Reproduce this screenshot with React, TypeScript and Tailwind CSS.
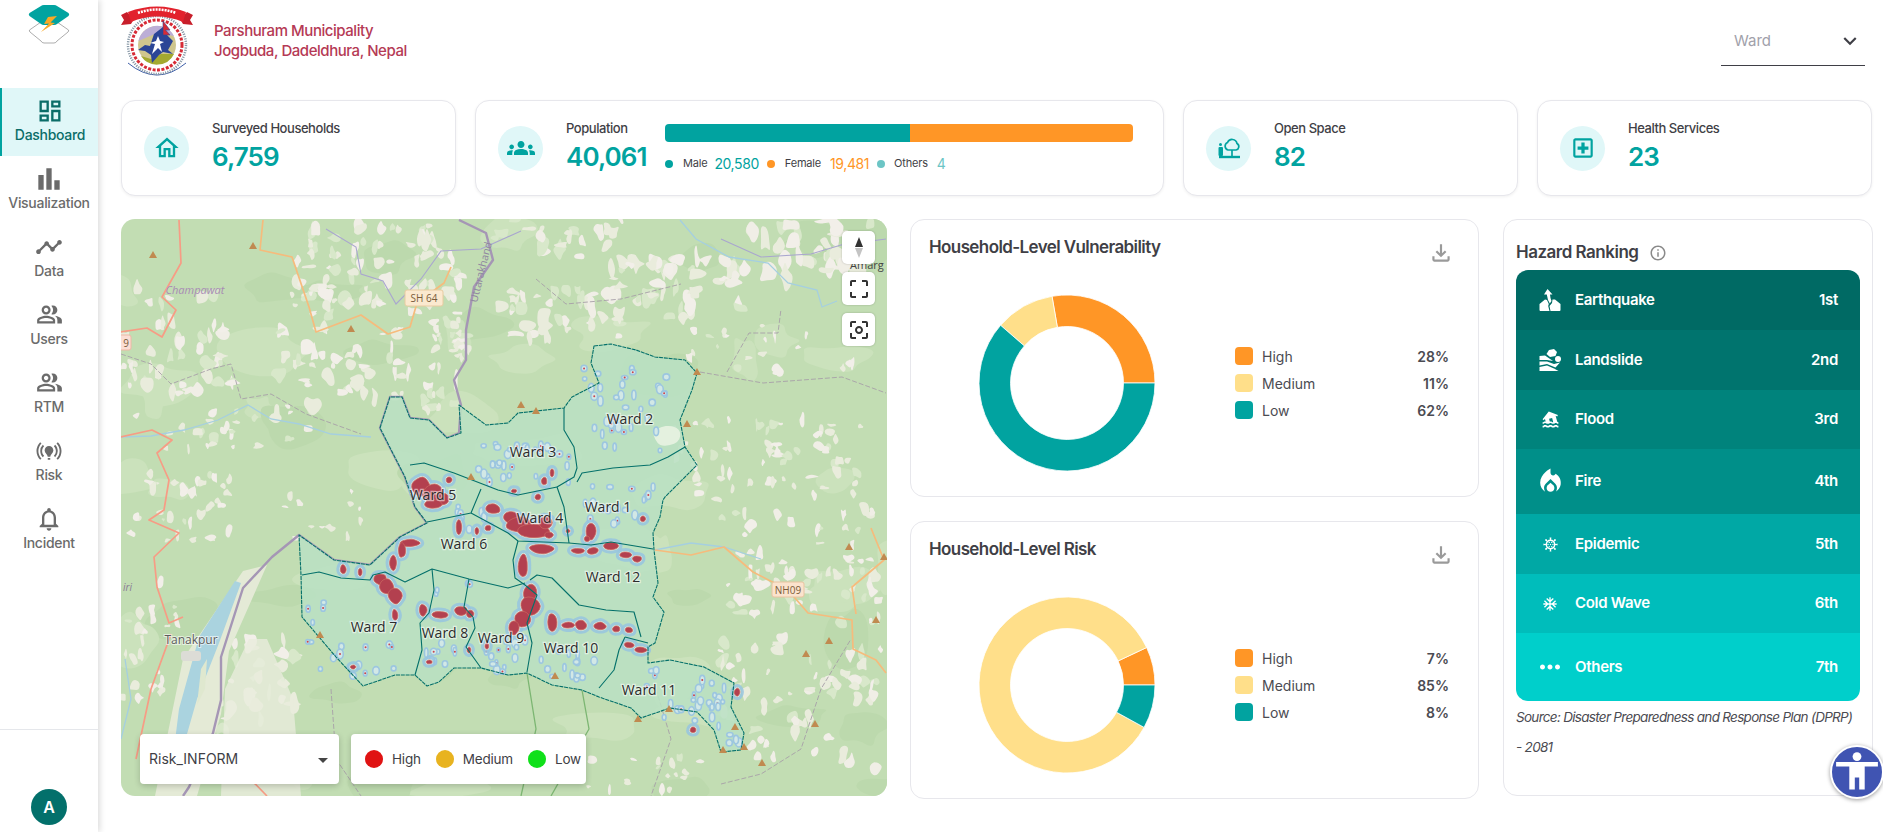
import React from 'react';
import {
  MdOutlineDashboard, MdBarChart, MdTimeline, MdOutlinePeopleAlt, MdOnlinePrediction, MdOutlineNotifications,
  MdOutlineHome, MdGroups, MdOutlineLocalHospital, MdInfoOutline, MdOutlineFileDownload, MdExpandMore,
  MdFlood, MdLocalFireDepartment, MdOutlineCoronavirus, MdAcUnit, MdMoreHoriz, MdArrowDropDown,
  MdCropFree, MdCenterFocusWeak,
} from 'react-icons/md';

// small seeded random so the map looks the same on every load
const makeRandom = (seed: number) => () => {
  seed = (seed * 16807) % 2147483647;
  return (seed - 1) / 2147483646;
};

const blobPath = (cx: number, cy: number, rx: number, ry: number, rnd: () => number, jitter = 0.3, n = 9) => {
  const pts = Array.from({ length: n }, (_, i) => {
    const a = (i / n) * Math.PI * 2;
    const k = 1 - jitter + rnd() * jitter * 2;
    return [cx + Math.cos(a) * rx * k, cy + Math.sin(a) * ry * k];
  });
  let d = '';
  pts.forEach((p, i) => {
    const q = pts[(i + 1) % n];
    const mx = ((p[0] + q[0]) / 2).toFixed(1);
    const my = ((p[1] + q[1]) / 2).toFixed(1);
    d += i === 0 ? `M${mx} ${my}` : ` Q${p[0].toFixed(1)} ${p[1].toFixed(1)} ${mx} ${my}`;
  });
  const f = pts[0];
  const s = pts[1];
  return `${d} Q${f[0].toFixed(1)} ${f[1].toFixed(1)} ${((f[0] + s[0]) / 2).toFixed(1)} ${((f[1] + s[1]) / 2).toFixed(1)}Z`;
};

// cx, cy, spread x, spread y, count, patch size
const patchClusters = [
  [240, 50, 70, 45, 70, 5], [320, 50, 25, 30, 18, 6], [60, 120, 60, 55, 46, 5], [250, 150, 95, 45, 70, 5],
  [100, 210, 90, 25, 26, 4], [440, 95, 60, 25, 36, 6], [560, 70, 70, 30, 50, 6], [690, 30, 60, 28, 36, 7],
  [650, 130, 90, 25, 22, 4], [640, 240, 100, 40, 60, 4], [680, 330, 80, 40, 40, 4], [680, 450, 80, 100, 90, 5],
  [60, 290, 50, 35, 34, 4], [130, 490, 45, 70, 44, 6], [30, 420, 30, 60, 24, 4], [520, 555, 60, 18, 16, 4],
  [440, 20, 70, 20, 20, 6], [330, 120, 20, 30, 16, 4], [200, 300, 40, 30, 12, 3],
];
const softPatches = (() => {
  const rnd = makeRandom(77);
  return Array.from({ length: 60 }, () => ({
    d: blobPath(rnd() * 766, rnd() * 577, 12 + rnd() * 30, 8 + rnd() * 20, rnd, 0.4, 11),
    c: rnd() > 0.4 ? '#cbe2bc' : '#bcd9ad',
  }));
})();
const terrainPatches = (() => {
  const rnd = makeRandom(4711);
  const colours = ['#f0eee6', '#e9ecdc', '#d8e8ca', '#e9ecdc', '#f2efe9'];
  return patchClusters.flatMap(([cx, cy, sx, sy, count, size]) =>
    Array.from({ length: count }, () => {
      const x = cx + (rnd() * 2 - 1) * sx;
      const y = cy + (rnd() * 2 - 1) * sy;
      const c = colours[Math.floor(rnd() * colours.length)];
      return { d: blobPath(x, y, size * (0.4 + rnd()), size * (0.4 + rnd() * 1.3), rnd, 0.6, 8), c };
    }),
  );
})();

const toLine = (pts: number[][]) => pts.map(p => p.join(',')).join(' ');

const outline = [
  [473, 127], [490, 125], [515, 131], [534, 138], [564, 141], [576, 154], [571, 171], [559, 201], [564, 228], [576, 246],
  [544, 278], [542, 281], [539, 298], [532, 314], [533, 331], [537, 364], [532, 378], [543, 393], [534, 424], [527, 428],
  [527, 444], [549, 441], [583, 448], [613, 464], [610, 488], [623, 514], [620, 531], [600, 533], [593, 511], [576, 493],
  [549, 489], [520, 499], [510, 489], [478, 478], [461, 471], [431, 466], [406, 454], [387, 456], [360, 449], [333, 449],
  [318, 463], [306, 467], [294, 456], [274, 456], [242, 467], [215, 438], [181, 398], [180, 356], [178, 316], [213, 341],
  [249, 346], [279, 318], [306, 304], [294, 288], [284, 258], [259, 209], [269, 178], [281, 178], [289, 199], [308, 201],
  [326, 219], [340, 214], [338, 186], [365, 206], [387, 204], [397, 194], [443, 189], [451, 178], [478, 164], [470, 144],
];

const wardLines = [
  [[443, 189], [443, 211], [453, 228], [456, 249], [453, 258], [436, 268]],
  [[456, 263], [461, 254], [492, 249], [529, 246], [547, 238], [564, 228]],
  [[289, 246], [303, 244], [333, 254], [377, 271], [397, 276], [436, 268]],
  [[436, 268], [443, 288], [448, 324]],
  [[360, 270], [350, 294], [306, 303]],
  [[350, 294], [387, 314], [397, 322], [448, 324], [470, 326], [490, 323], [532, 330]],
  [[397, 322], [392, 341], [394, 359], [404, 366]],
  [[181, 356], [198, 353], [220, 359], [249, 361], [252, 356], [264, 353], [284, 363], [311, 350], [348, 360], [387, 369], [404, 364]],
  [[311, 350], [313, 371], [308, 394], [299, 404], [301, 431], [294, 456]],
  [[348, 360], [343, 388], [352, 398], [354, 409], [345, 428], [360, 449]],
  [[404, 366], [416, 376], [406, 404], [411, 424], [406, 453]],
  [[409, 361], [416, 356], [431, 359], [458, 386], [485, 391], [513, 393], [520, 418]],
  [[504, 418], [527, 424]],
  [[504, 418], [498, 431], [493, 451], [478, 469]],
];

// red hot spots: cx, cy, rx, ry
const hotSpots = [
  [300, 268, 11, 10], [312, 274, 11, 10], [320, 280, 9, 7], [312, 285, 9, 5], [372, 290, 8, 5], [390, 298, 9, 6], [398, 306, 13, 8],
  [412, 312, 18, 7], [424, 304, 7, 7], [428, 316, 5, 3], [470, 312, 5, 9], [466, 320, 3, 3], [421, 330, 13, 5], [457, 332, 7, 2.5],
  [472, 332, 6, 3.5], [490, 327, 8, 4], [505, 336, 6, 3], [516, 340, 5, 3], [289, 324, 10, 4], [281, 331, 4, 8], [272, 344, 4, 8],
  [338, 308, 3, 8], [402, 347, 5, 12], [259, 360, 7, 6], [266, 368, 8, 8], [274, 377, 7, 8], [274, 396, 3, 6], [302, 391, 4, 6],
  [319, 396, 9, 3.5], [340, 392, 7, 5], [349, 395, 4, 4], [409, 374, 7, 9], [409, 387, 10, 9], [402, 400, 8, 9], [393, 409, 5, 7],
  [431, 403, 5, 9], [447, 406, 7, 3], [460, 406, 6, 5], [479, 407, 6, 4], [495, 410, 4, 3], [508, 411, 4, 3], [508, 426, 5, 3],
  [520, 431, 6, 3], [616, 473, 3, 4], [572, 511, 3, 3], [222, 350, 3, 5], [239, 353, 2, 4], [447, 312, 2, 2], [367, 309, 3, 3],
  [522, 300, 3, 3], [393, 272, 3, 2], [423, 262, 3, 4], [417, 278, 3, 3], [431, 254, 2, 4], [328, 261, 3, 3], [356, 312, 2, 4],
  [232, 448, 3, 2], [348, 431, 2, 3], [308, 443, 3, 2], [366, 427, 2, 3],
];

// small pale-blue rings with a pale centre
const rings = (() => {
  const rnd = makeRandom(99);
  const zones = [
    [505, 180, 42, 32, 28], [500, 225, 40, 18, 8], [405, 245, 48, 22, 30], [495, 285, 38, 20, 18], [350, 300, 14, 18, 8],
    [245, 440, 50, 18, 12], [195, 395, 16, 30, 6], [320, 435, 20, 12, 10], [385, 435, 20, 18, 14], [450, 445, 30, 14, 14],
    [590, 480, 22, 20, 18], [570, 495, 30, 16, 8], [608, 522, 10, 8, 4], [345, 370, 30, 6, 4], [530, 460, 6, 12, 4],
  ];
  return zones.flatMap(([cx, cy, sx, sy, count]) =>
    Array.from({ length: count }, () => ({
      x: cx + (rnd() * 2 - 1) * sx,
      y: cy + (rnd() * 2 - 1) * sy,
      rx: 1.6 + rnd() * 1.8,
      ry: 2 + rnd() * 3,
      dot: rnd() > 0.72,
    })),
  );
})();

const peaks = [
  [132, 27], [32, 36], [230, 110], [400, 186], [415, 192], [576, 153], [566, 205], [350, 258], [728, 328], [763, 338], [755, 401],
  [708, 422], [685, 435], [694, 505], [641, 544], [434, 457], [548, 490], [517, 500], [602, 531], [623, 528], [614, 508], [199, 416],
];

const wardLabels: [string, number, number][] = [
  ['Ward 2', 509, 200], ['Ward 3', 412, 233], ['Ward 5', 312, 276], ['Ward 1', 487, 288], ['Ward 4', 419, 299], ['Ward 6', 343, 325],
  ['Ward 12', 492, 358], ['Ward 7', 253, 408], ['Ward 8', 324, 414], ['Ward 9', 380, 419], ['Ward 10', 450, 429], ['Ward 11', 528, 471],
];

const MapDrawing = () => {
  const hotRnd = makeRandom(321);
  const hotPaths = hotSpots.map(([x, y, rx, ry]) => blobPath(x, y, rx, ry, hotRnd, 0.14));
  return (
    <svg viewBox="0 0 766 577" className="block h-full w-full">
      <rect width="766" height="577" fill="#c2ddb3" />
      {softPatches.map((p, i) => <path key={i} d={p.d} fill={p.c} />)}
      {terrainPatches.map((p, i) => <path key={i} d={p.d} fill={p.c} />)}
      <path d="M104 470 L128 420 L146 420 L172 480 L180 577 L100 577Z" fill="#e8ecdc" fillOpacity="0.8" />
      <path d="M122 352 L146 346 L108 432 L100 495 L76 577 L34 577 L62 440Z" fill="#e4ead6" />
      <path d="M120 364 L114 362 L78 418 L58 490 L52 538 L60 536 L76 480 L98 424Z" fill="#aad3df" />
      <path d="M80 450 L86 440 L84 470 L76 486Z" fill="#dfe8cf" />
      <rect x="60" y="432" width="20" height="10" rx="3" fill="#dcdcd6" />

      {/* rivers */}
      <g fill="none" stroke="#a5cfe0" strokeWidth="1.3">
        <polyline points="559,1 575,20 608,38 647,44 667,64 696,71 701,88 716,82" />
        <polyline points="0,218 30,217 63,211 97,201 127,186 150,200 178,205 210,215 250,218" />
        <polyline points="534,331 570,324 603,328 640,340" />
        <polyline points="0,520 10,480 4,440" />
      </g>
      <g fill="none" stroke="#a9a6cf" strokeWidth="1.1">
        <polyline points="205,10 235,28 240,55 262,62 275,85 300,60 320,32 360,30 400,12" />
        <polyline points="600,20 640,38 690,35 720,26 765,20" />
      </g>

      {/* dashed admin lines */}
      <g fill="none" stroke="#a79fa8" strokeWidth="0.9" strokeDasharray="5 2">
        <polyline points="579,153 642,164 721,158 765,174" />
        <polyline points="606,153 628,114 657,114 660,90" />
        <polyline points="0,135 30,145 50,165 90,150 110,145 120,180 150,175 185,195 240,215" />
        <polyline points="415,60 445,85 500,80 560,65" />
        <polyline points="535,470 550,520 530,577" />
        <polyline points="600,565 640,555 680,530 700,470 730,420" />
        <polyline points="210,470 215,540 240,577" />
      </g>

      {/* park boundary */}
      <g fill="none" stroke="#7cb672" strokeWidth="1.3">
        <polyline points="406,454 415,510 400,577" />
        <polyline points="461,471 468,510 430,577" />
      </g>

      {/* roads */}
      <g fill="none" stroke="#f6bb7c" strokeWidth="1.7" strokeLinejoin="round">
        <polyline points="142,1 139,31 171,38 188,88 195,113 240,96 267,115 289,108 296,84 323,64 330,48" />
        <polyline points="534,331 570,336 603,328 632,353 667,371 687,394 731,401 732,430 755,441 765,454" />
        <polyline points="750,309 763,341 731,368 735,395" />
      </g>
      <g fill="none" stroke="#f79c85" strokeWidth="1.7" strokeLinejoin="round">
        <polyline points="58,1 60,44 41,78 55,91 41,118 26,109 -1,113" />
        <polyline points="-1,218 31,211 51,221 36,234 48,261 43,291 28,301 58,314 33,338 36,368 48,404 62,398" />
        <polyline points="50,415 30,470 15,540" />
        <polyline points="110,540 146,577" />
      </g>

      {/* state border */}
      <g fill="none" stroke="#a596b5" strokeWidth="2.4" strokeLinejoin="round">
        <polyline points="338,1 365,14 372,41 353,68 345,111 345,141 333,161 340,186 338,214 326,219 308,201 289,199 281,178 269,178 259,209 284,258 294,288 306,304 279,318 249,346 213,341 178,316 151,338 122,369 100,438 100,481 92,514 68,568 62,577" />
      </g>

      {/* municipality */}
      <polygon points={toLine(outline)} fill="#b9e0c3" fillOpacity="0.88" />
      <path d={blobPath(547, 217, 15, 11, makeRandom(8), 0.15)} fill="#e4f1df" />
      {rings.map((r, i) => (
        <g key={i}>
          <ellipse cx={r.x} cy={r.y} rx={r.rx} ry={r.ry} fill="#d2e8e6" stroke="#9cc6e0" strokeWidth="1.6" />
          {r.dot && <circle cx={r.x} cy={r.y} r="1" fill="#c9444f" />}
        </g>
      ))}
      {hotPaths.map((d, i) => <path key={i} d={d} fill="#a9d3e2" stroke="#97c4df" strokeOpacity="0.85" strokeWidth="8" strokeLinejoin="round" />)}
      {hotPaths.map((d, i) => <path key={i} d={d} fill="#dfe9dc" stroke="#dfe9dc" strokeWidth="2" />)}
      {hotPaths.map((d, i) => <path key={i} d={d} fill="#b3404f" stroke="#c8655f" strokeWidth="0.8" />)}

      <g fill="none" stroke="#04706a" strokeWidth="1.1" strokeLinejoin="round">
        <polygon points={toLine(outline)} strokeDasharray="4 0.8" />
        {wardLines.map((l, i) => <polyline key={i} points={toLine(l)} />)}
      </g>

      {peaks.map(([x, y], i) => <polygon key={i} points={`${x},${y - 4} ${x + 4},${y + 3} ${x - 4},${y + 3}`} fill="#c08a50" />)}

      {/* labels */}
      <g className="font-['Open_Sans',sans-serif]">
        {wardLabels.map(([t, x, y]) => (
          <text key={t} x={x} y={y + 5} textAnchor="middle" fontSize="14" fill="#2b2b2b" stroke="#ffffff" strokeOpacity="0.55" strokeWidth="2.5" paintOrder="stroke">{t}</text>
        ))}
        <text x="74" y="75" textAnchor="middle" fontSize="11" fontStyle="italic" fill="#a88bb5">Champawat</text>
        <text x="0" y="0" transform="translate(356 84) rotate(-76)" fontSize="10.5" fill="#8f86a0">Uttarakhand</text>
        <text x="70" y="425" textAnchor="middle" fontSize="12" fill="#5c5c5c" stroke="#ffffff" strokeOpacity="0.6" strokeWidth="2" paintOrder="stroke">Tanakpur</text>
        <text x="729" y="50" fontSize="11" fill="#444444">Amarg</text>
        <rect x="284" y="71" width="38" height="16" rx="2" fill="#fbe9cf" stroke="#e8cba0" />
        <text x="303" y="83" textAnchor="middle" fontSize="10" fill="#7a5c3a">SH 64</text>
        <rect x="651" y="363" width="32" height="15" rx="2" fill="#fbe3cd" stroke="#e8c3a0" />
        <text x="667" y="374.5" textAnchor="middle" fontSize="10" fill="#7a5c3a">NH09</text>
        <rect x="-4" y="116" width="14" height="15" rx="2" fill="#fbded4" stroke="#eeb7a5" />
        <text x="5" y="127.5" textAnchor="middle" fontSize="10" fill="#7a5c3a">9</text>
        <text x="2" y="372" fontSize="10" fontStyle="italic" fill="#8a7a95">iri</text>
      </g>
    </svg>
  );
};

const AppLogo = () => (
  <svg viewBox="0 0 42 40" className="h-[40px] w-[42px]">
    <path d="M1.5 25 Q1 26 2 27 L13 36 Q14 38 16 38 H26 Q28 38 29 36 L40 27 Q41 26 40.5 25 L29 17 H13Z" fill="#ffffff" stroke="#8a8a8a" strokeWidth="0.7" />
    <path d="M1.5 8 Q0 9.5 1.5 11 L13 19 Q14 20 16 20 H26 Q28 20 29 19 L40.5 11 Q42 9.5 40.5 8 L29 1 Q28 0 26 0 H16 Q14 0 13 1Z" fill="#01a3a0" />
    <path d="M29 11 L20 12 L16 19 L21 18.5 L13 27 L27 18 L22.5 17.5Z" fill="#f9a926" />
  </svg>
);

// simplified municipality seal
const Emblem = () => (
  <svg viewBox="0 0 72 72" className="h-[72px] w-[72px] shrink-0">
    <path d="M7 58 Q36 82 65 58" fill="none" stroke="#3f5fa8" strokeWidth="1" />
    <circle cx="36" cy="40" r="29" fill="none" stroke="#8a9aa8" strokeWidth="2.5" strokeDasharray="1.2 1.2" />
    <circle cx="36" cy="40" r="25" fill="none" stroke="#d62b36" strokeWidth="3" strokeDasharray="3 1.5" />
    <circle cx="36" cy="40" r="21" fill="#ffffff" />
    <circle cx="36" cy="40" r="19" fill="#cfc68e" />
    <path d="M17.5 36 A19 19 0 0 1 53 31 L36 28Z" fill="#bcaed6" />
    <path d="M20 51 A19 19 0 0 0 53 49 L40 49 L30 54Z" fill="#a3a930" />
    <path d="M17 45 L24 40 L29 41 L33 29 L42 22 L46 30 L52 36 L47 45 L52 49 L42 47 L38 50 L31 58 L30 50 L24 46Z" fill="#2b4596" />
    <path d="M37 31 L39 36 L43 37 L39 39 L41 47 L37 43 L31 49 L34 39 L29 38 L35 36Z" fill="#ffffff" />
    <path d="M42 16 L42 30 L49 30 L44.5 25 L49 25Z" fill="#d62b36" stroke="#2b4596" strokeWidth="0.6" />
    <path d="M6 7 L0 10 L3 15 L0 20 L10 19 L13 14Z" fill="#c81e2a" />
    <path d="M66 7 L72 10 L69 15 L72 20 L62 19 L59 14Z" fill="#c81e2a" />
    <path d="M7 7 Q36 -4 65 7 L62 17 Q36 6 10 17Z" fill="#e2222d" />
    <path d="M17 8 Q36 1 55 8" fill="none" stroke="#ffffff" strokeWidth="2.6" strokeDasharray="2 1" />
  </svg>
);

const EarthquakeIcon = () => (
  <svg viewBox="0 0 22 22" className="h-[22px] w-[22px]" fill="#ffffff">
    <path d="M8.5 0 L13.5 5.5 L11 5.5 L11.5 9 L12.5 12 L10.8 14.5 L9 11 L7.8 5.5 L5 5.5Z" />
    <path d="M0.5 15 L6 10.5 L8 11 L9.8 15 L9.2 17 L10.5 22 H1.5 Q0.5 22 0.5 21Z" />
    <path d="M13.5 10.5 L16 10.5 L21.5 15 V21 Q21.5 22 20.5 22 H11.5 L10.5 17 L13 14Z" />
  </svg>
);

const LandslideIcon = () => (
  <svg viewBox="0 0 22 22" className="h-[22px] w-[22px]" fill="#ffffff">
    <path d="M7.5 5 L10 1 L15 0 L18 3 L16.5 7 L11 8Z" />
    <circle cx="19" cy="10" r="3" />
    <path d="M0.5 7 L6 6.5 L14 12 L8 11 L0.5 11Z" />
    <path d="M0.5 12.5 L8 12.5 L15 15 L21 13.5 L16.5 18.5 L8 15 L0.5 16.5Z" />
    <path d="M0.5 18 L8 16.5 L15 19.5 L19.5 22 H0.5Z" />
  </svg>
);

const navItems = [
  { label: 'Dashboard', icon: MdOutlineDashboard, size: 28, active: true },
  { label: 'Visualization', icon: MdBarChart, size: 32 },
  { label: 'Data', icon: MdTimeline, size: 28 },
  { label: 'Users', icon: MdOutlinePeopleAlt, size: 27 },
  { label: 'RTM', icon: MdOutlinePeopleAlt, size: 27 },
  { label: 'Risk', icon: MdOnlinePrediction, size: 30 },
  { label: 'Incident', icon: MdOutlineNotifications, size: 28 },
];

const Sidebar = () => (
  <aside className="z-10 flex h-full w-[98px] shrink-0 flex-col bg-white shadow-[2px_0_6px_rgba(0,0,0,0.14)]">
    <div className="flex h-[88px] justify-center pt-[5px]"><AppLogo /></div>
    <nav className="flex-1">
      {navItems.map(item => (
        <div
          key={item.label}
          className={item.active
            ? 'flex h-[68px] flex-col items-center justify-center border-l-2 border-[#01a3a0] bg-[#e0f7f8] pb-[3px] text-[#0a6d68]'
            : 'flex h-[68px] flex-col items-center justify-center pb-[3px] text-[#6b6b6b]'}
        >
          <span className="flex h-[26px] items-center justify-center"><item.icon size={item.size} className="shrink-0" /></span>
          <span className="mt-[2px] text-[14px] leading-[18px] font-medium tracking-[-0.3px]">{item.label}</span>
        </div>
      ))}
    </nav>
    <div className="flex h-[103px] items-end justify-center border-t border-[#e5e7eb] pb-[7px]">
      <div className="flex h-[36px] w-[36px] items-center justify-center rounded-full bg-[#03706b] text-[16px] font-semibold text-white">A</div>
    </div>
  </aside>
);

const IconCircle = ({ children }: { children: React.ReactNode }) => (
  <div className="flex h-[45px] w-[45px] shrink-0 items-center justify-center rounded-full bg-[#e0f7f8] text-[#01a3a0]">{children}</div>
);

const cardClass = 'flex h-[96px] items-center rounded-[14px] border border-[#e7e7ec] bg-white pl-[22px] shadow-[0_1px_3px_rgba(0,0,0,0.06)]';

const StatCard = ({ icon, label, value }: { icon: React.ReactNode; label: string; value: string }) => (
  <div className={`${cardClass} w-[335px] shrink-0`}>
    <IconCircle>{icon}</IconCircle>
    <div className="ml-[23px] -translate-y-[2px]">
      <p className="text-[13px] leading-[18px] font-medium tracking-[-0.45px] text-[#3f3f46]">{label}</p>
      <p className="mt-[4px] text-[26px] leading-[32px] font-semibold tracking-[-0.9px] text-[#01a3a0]">{value}</p>
    </div>
  </div>
);

const OpenSpaceIcon = () => (
  <svg viewBox="0 0 24 24" className="h-[24px] w-[24px]" fill="none" stroke="#01a3a0" strokeWidth="1.7">
    <path d="M11 14 H19 A3.5 3.5 0 0 0 20 7.5 A5 5 0 0 0 10.5 6.5 A4 4 0 0 0 11 14Z" />
    <path d="M15 14 V20" />
    <path d="M2 21 H23" strokeWidth="2.4" />
    <circle cx="3.5" cy="8.5" r="1.5" fill="#01a3a0" stroke="none" />
    <rect x="1.5" y="11" width="4.5" height="9" rx="1" fill="#01a3a0" stroke="none" />
  </svg>
);

const PopulationCard = () => (
  <div className={`${cardClass} w-[689px] shrink-0`}>
    <IconCircle><MdGroups size={28} /></IconCircle>
    <div className="ml-[23px] w-[99px] shrink-0 -translate-y-[2px]">
      <p className="text-[13px] leading-[18px] font-medium tracking-[-0.45px] text-[#3f3f46]">Population</p>
      <p className="mt-[4px] text-[26px] leading-[32px] font-semibold tracking-[-0.9px] text-[#01a3a0]">40,061</p>
    </div>
    <div className="w-[468px]">
      <div className="flex h-[18px] overflow-hidden rounded-[4px]">
        <div className="w-[245px] bg-[#01a3a0]" />
        <div className="flex-1 bg-[#ff9626]" />
      </div>
      <div className="mt-[13px] flex h-[18px] items-center text-[11px] tracking-[-0.2px] text-[#3f3f46]">
        <span className="h-[8px] w-[8px] rounded-full bg-[#01a3a0]" />
        <span className="ml-[10px]">Male</span>
        <span className="ml-[7px] text-[14px] tracking-[-0.4px] text-[#01a3a0]">20,580</span>
        <span className="ml-[8px] h-[8px] w-[8px] rounded-full bg-[#ff9626]" />
        <span className="ml-[10px]">Female</span>
        <span className="ml-[9px] text-[14px] tracking-[-0.4px] text-[#ff9626]">19,481</span>
        <span className="ml-[8px] h-[8px] w-[8px] rounded-full bg-[#6cc5c5]" />
        <span className="ml-[9px]">Others</span>
        <span className="ml-[9px] text-[14px] text-[#6cc5c5]">4</span>
      </div>
    </div>
  </div>
);

const polar = (cx: number, cy: number, r: number, deg: number) => {
  const a = (deg * Math.PI) / 180;
  return [cx + r * Math.cos(a), cy - r * Math.sin(a)];
};

// slices go counter-clockwise from 3 o'clock
const Donut = ({ slices }: { slices: { value: number; colour: string }[] }) => {
  const total = slices.reduce((s, x) => s + x.value, 0);
  let start = 0;
  return (
    <svg viewBox="0 0 180 180" className="h-[180px] w-[180px] shrink-0">
      {slices.map((s, i) => {
        const end = start + (s.value / total) * 360;
        const [x1, y1] = polar(90, 90, 88, start);
        const [x2, y2] = polar(90, 90, 88, end);
        const [x3, y3] = polar(90, 90, 56.5, end);
        const [x4, y4] = polar(90, 90, 56.5, start);
        const large = end - start > 180 ? 1 : 0;
        const d = `M${x1} ${y1} A88 88 0 ${large} 0 ${x2} ${y2} L${x3} ${y3} A56.5 56.5 0 ${large} 1 ${x4} ${y4}Z`;
        start = end;
        return <path key={i} d={d} fill={s.colour} stroke="#ffffff" strokeWidth="0.8" />;
      })}
    </svg>
  );
};

const levelColours = { High: '#ff9626', Medium: '#ffdf8a', Low: '#01a3a0' };

const ChartCard = ({ title, high, medium, low }: { title: string; high: number; medium: number; low: number }) => {
  const rows: [keyof typeof levelColours, number][] = [['High', high], ['Medium', medium], ['Low', low]];
  return (
    <div className="relative h-[278px] rounded-[14px] border border-[#e7e7ec] bg-white">
      <h3 className="absolute top-[15px] left-[18px] text-[17px] leading-[24px] font-semibold tracking-[-0.6px] text-[#3f3f46]">{title}</h3>
      <MdOutlineFileDownload size={26} className="absolute top-[20px] right-[24px] text-[#9a9a9a]" />
      <div className="flex h-full items-center pt-[50px] pl-[66px]">
        <Donut slices={rows.map(([k, v]) => ({ value: v, colour: levelColours[k] }))} />
        <div className="ml-[78px] flex w-[214px] flex-col gap-[9px]">
          {rows.map(([k, v]) => (
            <div key={k} className="flex h-[18px] items-center text-[14px] text-[#4b4b52]">
              <span className="mr-[9px] h-[18px] w-[18px] rounded-[4px]" style={{ backgroundColor: levelColours[k] }} />
              <span>{k}</span>
              <span className="ml-auto font-semibold">{v}%</span>
            </div>
          ))}
        </div>
      </div>
    </div>
  );
};

const hazards = [
  { name: 'Earthquake', rank: '1st', bg: 'bg-[#006a64]', h: 'h-[60px]', icon: <EarthquakeIcon /> },
  { name: 'Landslide', rank: '2nd', bg: 'bg-[#00746e]', h: 'h-[60px]', icon: <LandslideIcon /> },
  { name: 'Flood', rank: '3rd', bg: 'bg-[#00837c]', h: 'h-[59px]', icon: <MdFlood size={19} /> },
  { name: 'Fire', rank: '4th', bg: 'bg-[#008f89]', h: 'h-[65px]', icon: <MdLocalFireDepartment size={31} className="shrink-0" /> },
  { name: 'Epidemic', rank: '5th', bg: 'bg-[#00a8a5]', h: 'h-[60px]', icon: <MdOutlineCoronavirus size={17} /> },
  { name: 'Cold Wave', rank: '6th', bg: 'bg-[#00bdbb]', h: 'h-[59px]', icon: <MdAcUnit size={16} /> },
  { name: 'Others', rank: '7th', bg: 'bg-[#00cfcb]', h: 'h-[68px]', icon: <MdMoreHoriz size={30} className="shrink-0" /> },
];

const HazardCard = () => (
  <div className="ml-px h-[577px] w-[370px] shrink-0 rounded-[14px] border border-[#e7e7ec] bg-white px-[12px]">
    <div className="flex h-[50px] items-center pt-[15px]">
      <h3 className="text-[17px] font-semibold tracking-[-0.5px] text-[#3f3f46]">Hazard Ranking</h3>
      <MdInfoOutline size={18} className="ml-[11px] text-[#8a8a8a]" />
    </div>
    <div className="overflow-hidden rounded-[12px]">
      {hazards.map(h => (
        <div key={h.name} className={`flex items-center text-[15px] font-semibold tracking-[-0.3px] text-white ${h.bg} ${h.h}`}>
          <span className="ml-[23px] flex w-[22px] justify-center">{h.icon}</span>
          <span className="ml-[14px]">{h.name}</span>
          <span className="mr-[22px] ml-auto">{h.rank}</span>
        </div>
      ))}
    </div>
    <p className="mt-[1px] text-[13.5px] leading-[30px] tracking-[-0.7px] whitespace-nowrap text-[#4b4b52] italic">
      Source: Disaster Preparedness and Response Plan (DPRP)
      <br />
      - 2081
    </p>
  </div>
);

const MapCard = () => (
  <div className="relative h-[577px] w-[766px] shrink-0 overflow-hidden rounded-[14px]">
    <MapDrawing />
    <div className="absolute top-[12px] right-[12px] flex flex-col gap-[8px]">
      <div className="flex h-[33px] w-[33px] flex-col items-center justify-center gap-[1px] rounded-[5px] bg-white shadow-[0_0_2px_rgba(0,0,0,0.25)]">
        <span className="h-0 w-0 border-x-[4px] border-b-[10px] border-x-transparent border-b-[#333333]" />
        <span className="h-0 w-0 border-x-[4px] border-t-[10px] border-x-transparent border-t-[#c4c4c4]" />
      </div>
      <div className="flex h-[33px] w-[33px] items-center justify-center rounded-[5px] bg-white text-[#333333] shadow-[0_0_2px_rgba(0,0,0,0.25)]"><MdCropFree size={24} /></div>
      <div className="flex h-[33px] w-[33px] items-center justify-center rounded-[5px] bg-white text-[#333333] shadow-[0_0_2px_rgba(0,0,0,0.25)]"><MdCenterFocusWeak size={24} /></div>
    </div>
    <div className="absolute bottom-[12px] left-[19px] flex gap-[12px]">
      <div className="flex h-[50px] w-[199px] items-start justify-between rounded-[4px] bg-white pt-[14px] pr-[4px] pl-[9px] shadow-[0_2px_6px_rgba(0,0,0,0.2)]">
        <span className="text-[14px] text-[#3f3f46]">Risk_INFORM</span>
        <MdArrowDropDown size={24} className="text-[#444444]" />
      </div>
      <div className="flex h-[50px] w-[235px] items-center gap-[9px] rounded-[4px] bg-white pl-[14px] text-[13.5px] tracking-[-0.2px] text-[#3f3f46] shadow-[0_2px_6px_rgba(0,0,0,0.2)]">
        <span className="h-[18px] w-[18px] rounded-full bg-[#e01313]" />
        <span className="mr-[6px]">High</span>
        <span className="h-[18px] w-[18px] rounded-full bg-[#e8b320]" />
        <span className="mr-[6px]">Medium</span>
        <span className="h-[18px] w-[18px] rounded-full bg-[#10e01a]" />
        <span>Low</span>
      </div>
    </div>
  </div>
);

const AccessibilityButton = () => (
  <div className="absolute top-[745px] left-[1830px] flex h-[54px] w-[54px] items-center justify-center rounded-full border-2 border-white bg-[#4054b2] shadow-[0_1px_4px_rgba(0,0,0,0.4)]">
    <svg viewBox="0 0 40 40" className="h-[44px] w-[44px]" fill="#ffffff">
      <circle cx="20" cy="6" r="4" />
      <path d="M1 11 H39 V15 H27 V36 H22 V25 H18 V36 H13 V15 H1Z" />
    </svg>
  </div>
);

const App: React.FC = () => (
  <div className="relative flex h-[832px] w-[1883px] overflow-hidden bg-white font-['Inter',sans-serif]">
    <Sidebar />
    <main className="flex-1 pl-[23px]">
      <header className="flex h-[100px] items-start">
        <div className="flex items-center pt-[5px]">
          <Emblem />
          <div className="ml-[21px] text-[15px] leading-[20px] font-medium tracking-[-0.45px] text-[#b53a55]">
            <p>Parshuram Municipality</p>
            <p>Jogbuda, Dadeldhura, Nepal</p>
          </div>
        </div>
        <div className="mt-[21px] mr-[18px] ml-auto flex h-[45px] w-[144px] items-start justify-between border-b border-[#3f3f46] pt-[9px] pr-[2px] pl-[13px]">
          <span className="text-[15px] text-[#a1a1aa]">Ward</span>
          <MdExpandMore size={26} className="-mt-[2px] text-[#3f3f46]" />
        </div>
      </header>
      <section className="flex gap-[19px]">
        <StatCard icon={<MdOutlineHome size={28} />} label="Surveyed Households" value="6,759" />
        <PopulationCard />
        <StatCard icon={<OpenSpaceIcon />} label="Open Space" value="82" />
        <StatCard icon={<MdOutlineLocalHospital size={26} />} label="Health Services" value="23" />
      </section>
      <section className="mt-[23px] flex gap-[23px]">
        <MapCard />
        <div className="flex w-[569px] shrink-0 flex-col gap-[24px]">
          <ChartCard title="Household-Level Vulnerability" high={28} medium={11} low={62} />
          <ChartCard title="Household-Level Risk" high={7} medium={85} low={8} />
        </div>
        <HazardCard />
      </section>
    </main>
    <AccessibilityButton />
  </div>
);

export default App;
